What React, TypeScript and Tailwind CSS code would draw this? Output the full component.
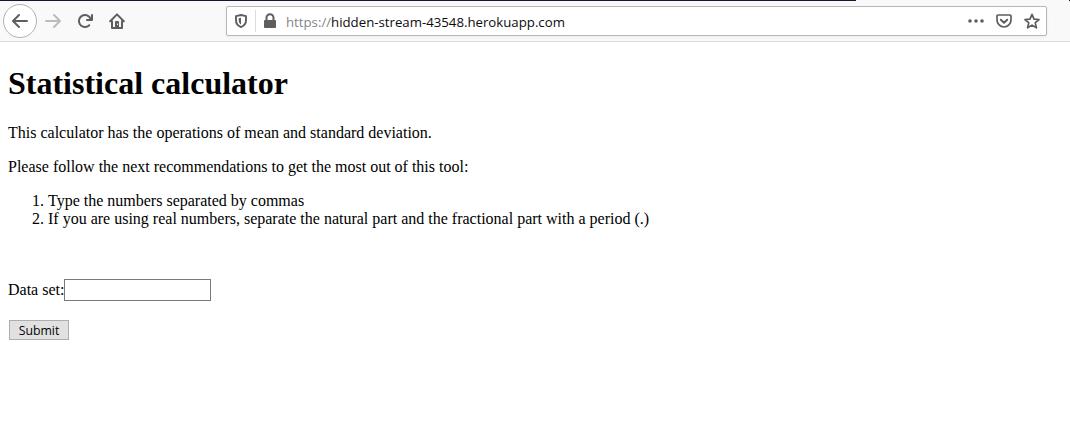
import React from "react";

const BACK =
  "M15 7H3.414l4.293-4.293a1 1 0 0 0-1.414-1.414l-6 6a1 1 0 0 0 0 1.414l6 6a1 1 0 0 0 1.414-1.414L3.414 9H15a1 1 0 0 0 0-2z";
const RELOAD =
  "M15 1a1 1 0 0 0-1 1v2.418A6.995 6.995 0 1 0 8 15a6.954 6.954 0 0 0 4.95-2.05 1 1 0 0 0-1.414-1.414A5.019 5.019 0 1 1 12.549 6H10a1 1 0 0 0 0 2h5a1 1 0 0 0 1-1V2a1 1 0 0 0-1-1z";

function Icon({ className = "", children }: { className?: string; children: React.ReactNode }) {
  return (
    <svg viewBox="0 0 16 16" className={`block size-4 shrink-0 fill-current ${className}`}>
      {children}
    </svg>
  );
}

function Toolbar() {
  return (
    <header className="h-[42px] border-b border-[#dcdcdc] bg-[#f9f9fa] font-['Open_Sans',sans-serif] text-[#5e5e5f]">
      <div className="flex h-px justify-between">
        <div className="w-[856px] bg-[#1b1533]" />
        <div className="w-px bg-[#1b1533]" />
      </div>
      <div className="flex h-10 items-center pl-[3px]">
        <button className="flex size-[34px] shrink-0 items-center justify-center rounded-full border border-[#b1b1b1] bg-white">
          <Icon><path d={BACK} /></Icon>
        </button>
        <Icon className="ml-2 -scale-x-100 text-[#bcbcbd]"><path d={BACK} /></Icon>
        <Icon className="ml-4"><path d={RELOAD} /></Icon>
        <Icon className="ml-4">
          <path d="M1.200 8.200 8 1.400l6.800 6.800" fill="none" stroke="currentColor" strokeWidth="2" strokeLinecap="round" strokeLinejoin="round" />
          <path d="M3 7.500V15h10V7.500" fill="none" stroke="currentColor" strokeWidth="2" strokeLinejoin="round" />
          <path fillRule="evenodd" d="M6 15V9a1 1 0 0 1 1-1h2a1 1 0 0 1 1 1v6zM8 10.500v1.500h1v-1.500z" />
        </Icon>
        <div className="ml-[101px] flex h-[30px] w-[821px] shrink-0 items-center rounded-[2px] border border-[#b7b7b7] bg-white pl-1.5 shadow-[0_1px_3px_rgba(0,0,0,0.06)]">
          <Icon>
            <path d="M8 2 13 3.200v4.300c0 3-2 5.300-5 6.600-3-1.300-5-3.600-5-6.600V3.200z" fill="none" stroke="currentColor" strokeWidth="1.900" strokeLinejoin="round" />
            <path d="M8 4.700v6.800c-1.500-1-2.300-2.300-2.300-4V5.200z" />
          </Icon>
          <div className="ml-[6px] h-[22px] w-px bg-[#dcdcdc]" />
          <Icon className="ml-1.5">
            <path d="M4.500 7.500V4.800a3.500 3.500 0 0 1 7 0v2.700" fill="none" stroke="currentColor" strokeWidth="2" />
            <rect x="2" y="7" width="12" height="8" rx="1" />
          </Icon>
          <span className="ml-2 w-[279px] whitespace-nowrap pt-0.5 text-[13.22px] leading-5 text-[#0c0c0d]">
            <span className="text-[#858585]">https://</span>hidden-stream-43548.herokuapp.com
          </span>
          <Icon className="ml-auto">
            <circle cx="2" cy="8" r="1.800" /><circle cx="8" cy="8" r="1.800" /><circle cx="14" cy="8" r="1.800" />
          </Icon>
          <Icon className="ml-3">
            <path d="M2 2h12a1 1 0 0 1 1 1v4a7 7 0 0 1-14 0V3a1 1 0 0 1 1-1z" fill="none" stroke="currentColor" strokeWidth="1.700" />
            <path d="m4.800 6.700 3.200 3 3.200-3" fill="none" stroke="currentColor" strokeWidth="1.900" strokeLinecap="round" strokeLinejoin="round" />
          </Icon>
          <Icon className="ml-3 mr-1.5">
            <path d="m8 1.400 2 4.700 5 .4-3.800 3.300 1.200 5L8 12.100l-4.400 2.700 1.200-5L1 6.500l5-.4z" fill="none" stroke="currentColor" strokeWidth="1.700" strokeLinejoin="round" />
          </Icon>
        </div>
      </div>
    </header>
  );
}

export default function App() {
  return (
    <div className="h-[428px] overflow-hidden bg-white">
      <Toolbar />
      <main className="px-2 pt-[23px] font-['Liberation_Serif',serif] text-base leading-[18px] text-black">
        <h1 className="text-[32px] font-bold leading-9">Statistical calculator</h1>
        <p className="mt-[23px]">This calculator has the operations of mean and standard deviation.</p>
        <p className="mt-4">Please follow the next recommendations to get the most out of this tool:</p>
        <ol className="mt-4 list-decimal pl-10">
          <li>Type the numbers separated by commas</li>
          <li>If you are using real numbers, separate the natural part and the fractional part with a period (.)</li>
        </ol>
        <form className="mt-[51px]" onSubmit={(e) => e.preventDefault()}>
          <label className="flex h-[22px] items-center">
            <span className="w-14 whitespace-nowrap">Data set:</span>
            <input className="h-[22px] w-[147px] border border-[#7a7a7a] bg-white px-1 outline-none" />
          </label>
          <button className="ml-px mt-[19px] flex h-5 w-[60px] items-center justify-center border border-[#adadad] bg-[#e1e1e1] pt-0.5 font-['Open_Sans',sans-serif] text-[12.3px] leading-4">
            Submit
          </button>
        </form>
      </main>
    </div>
  );
}
